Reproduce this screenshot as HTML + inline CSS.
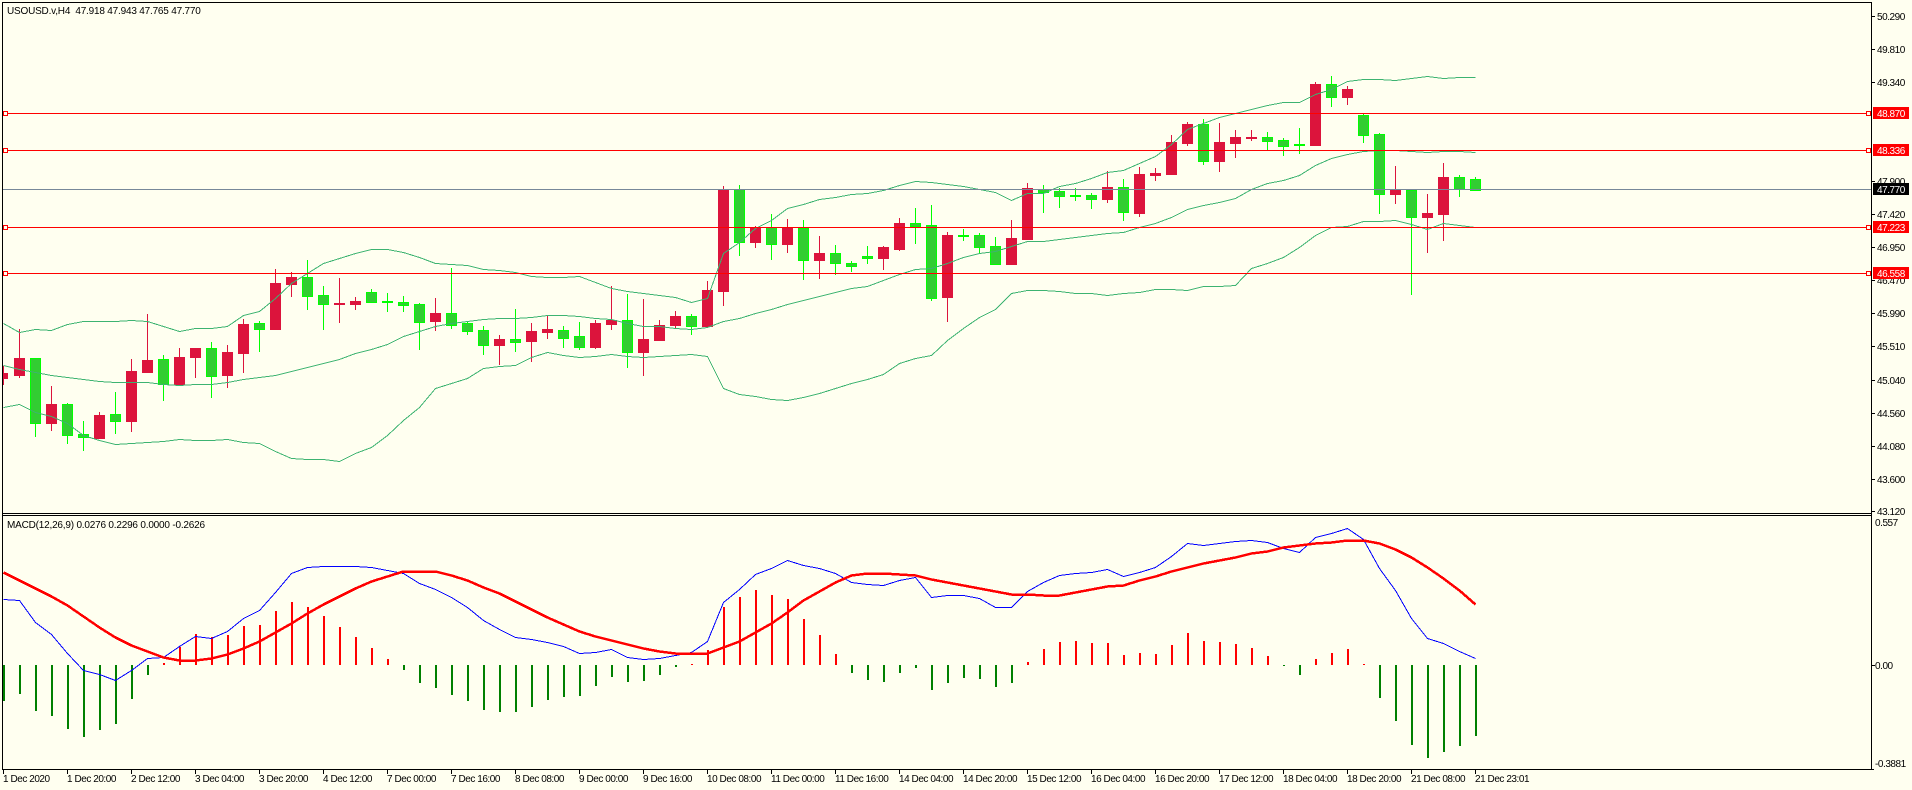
<!DOCTYPE html>
<html><head><meta charset="utf-8"><title>USOUSD.v,H4</title>
<style>
html,body{margin:0;padding:0;background:#fffff0;width:1912px;height:790px;overflow:hidden}
svg{display:block}
text{font-family:"Liberation Sans",sans-serif;font-size:10px;letter-spacing:-.45px;fill:#000;white-space:pre}
text.w{fill:#fff}
text.h{letter-spacing:-.2px}
</style></head><body>
<svg xmlns="http://www.w3.org/2000/svg" width="1912" height="790" viewBox="0 0 1912 790">
<defs><clipPath id="m"><rect x="3" y="3" width="1868" height="510"/></clipPath><clipPath id="n"><rect x="3" y="516" width="1868" height="253"/></clipPath></defs>
<rect width="1912" height="790" fill="#fffff0"/>
<g shape-rendering="crispEdges" clip-path="url(#m)" fill="none">
<path stroke="#dc143c" d="M3.5 366V385M19.5 329V378M51.5 386V431M99.5 412V438M131.5 359V432M147.5 314V373M179.5 348V385M195.5 348V378M227.5 345V388M243.5 319V373M275.5 269V330M291.5 272V297M339.5 278V323M355.5 297V310M435.5 298V331M499.5 335V365M531.5 323V362M547.5 316V339M595.5 320V349M611.5 286V330M643.5 299V376M659.5 320V341M675.5 311V329M707.5 281V327M723.5 186V306M755.5 226V248M787.5 219V253M819.5 236V279M883.5 246V270M899.5 218V251M947.5 232V322M1011.5 220V265M1027.5 183V239M1107.5 171V203M1139.5 167V217M1155.5 168V181M1171.5 135V175M1187.5 122V146M1219.5 123V172M1235.5 130V158M1251.5 130V141M1315.5 82V145M1347.5 86V105M1395.5 166V204M1427.5 194V253M1443.5 163V241"/>
<path stroke="#00ff00" d="M35.5 358V437M67.5 403V444M83.5 421V451M115.5 392V434M163.5 355V401M211.5 342V398M259.5 321V352M307.5 260V310M323.5 286V330M371.5 289V302M387.5 293V312M403.5 296V312M419.5 303V350M451.5 268V329M467.5 321V335M483.5 326V355M515.5 309V352M563.5 326V348M579.5 322V350M627.5 294V368M691.5 314V335M739.5 185V256M771.5 214V260M803.5 220V280M835.5 245V275M851.5 261V272M867.5 246V264M915.5 208V244M931.5 205V301M963.5 229V241M979.5 233V254M995.5 237V264M1043.5 185V213M1059.5 188V208M1075.5 188V201M1091.5 193V209M1123.5 179V221M1203.5 119V165M1267.5 132V150M1283.5 138V156M1299.5 128V154M1331.5 76V107M1363.5 114V143M1379.5 133V214M1411.5 190V295M1459.5 175V197M1475.5 177V191"/>
<path stroke="#dc143c" fill="#dc143c" d="M-2.5 373.5h10V378.5h-10zM14.5 358.5h10V375.5h-10zM46.5 404.5h10V423.5h-10zM94.5 415.5h10V438.5h-10zM126.5 371.5h10V421.5h-10zM142.5 360.5h10V372.5h-10zM174.5 357.5h10V384.5h-10zM190.5 348.5h10V357.5h-10zM222.5 352.5h10V375.5h-10zM238.5 324.5h10V353.5h-10zM270.5 283.5h10V329.5h-10zM286.5 277.5h10V284.5h-10zM334.5 303.5h10V304.5h-10zM350.5 301.5h10V304.5h-10zM430.5 313.5h10V321.5h-10zM494.5 339.5h10V345.5h-10zM526.5 331.5h10V341.5h-10zM542.5 329.5h10V332.5h-10zM590.5 323.5h10V347.5h-10zM606.5 320.5h10V324.5h-10zM638.5 339.5h10V352.5h-10zM654.5 325.5h10V340.5h-10zM670.5 316.5h10V325.5h-10zM702.5 290.5h10V326.5h-10zM718.5 189.5h10V291.5h-10zM750.5 227.5h10V242.5h-10zM782.5 227.5h10V244.5h-10zM814.5 253.5h10V260.5h-10zM878.5 247.5h10V258.5h-10zM894.5 223.5h10V249.5h-10zM942.5 235.5h10V297.5h-10zM1006.5 238.5h10V264.5h-10zM1022.5 188.5h10V239.5h-10zM1102.5 187.5h10V199.5h-10zM1134.5 174.5h10V213.5h-10zM1150.5 173.5h10V175.5h-10zM1166.5 142.5h10V174.5h-10zM1182.5 124.5h10V143.5h-10zM1214.5 142.5h10V161.5h-10zM1230.5 137.5h10V143.5h-10zM1246.5 137.5h10V138.5h-10zM1310.5 84.5h10V145.5h-10zM1342.5 89.5h10V97.5h-10zM1390.5 190.5h10V194.5h-10zM1422.5 213.5h10V217.5h-10zM1438.5 177.5h10V214.5h-10z"/>
<path stroke="#00ff00" fill="#32cd32" d="M30.5 358.5h10V423.5h-10zM62.5 404.5h10V435.5h-10zM78.5 434.5h10V437.5h-10zM110.5 414.5h10V421.5h-10zM158.5 359.5h10V384.5h-10zM206.5 348.5h10V376.5h-10zM254.5 323.5h10V329.5h-10zM302.5 277.5h10V296.5h-10zM318.5 295.5h10V304.5h-10zM366.5 292.5h10V302.5h-10zM382.5 301.5h10V302.5h-10zM398.5 302.5h10V305.5h-10zM414.5 304.5h10V322.5h-10zM446.5 313.5h10V325.5h-10zM462.5 323.5h10V331.5h-10zM478.5 330.5h10V345.5h-10zM510.5 339.5h10V342.5h-10zM558.5 330.5h10V338.5h-10zM574.5 336.5h10V347.5h-10zM622.5 320.5h10V352.5h-10zM686.5 316.5h10V326.5h-10zM734.5 189.5h10V242.5h-10zM766.5 227.5h10V244.5h-10zM798.5 228.5h10V260.5h-10zM830.5 253.5h10V263.5h-10zM846.5 263.5h10V266.5h-10zM862.5 256.5h10V258.5h-10zM910.5 223.5h10V226.5h-10zM926.5 225.5h10V298.5h-10zM958.5 235.5h10V236.5h-10zM974.5 235.5h10V247.5h-10zM990.5 246.5h10V264.5h-10zM1038.5 189.5h10V192.5h-10zM1054.5 191.5h10V196.5h-10zM1070.5 195.5h10V196.5h-10zM1086.5 195.5h10V199.5h-10zM1118.5 187.5h10V212.5h-10zM1198.5 124.5h10V161.5h-10zM1262.5 137.5h10V141.5h-10zM1278.5 140.5h10V146.5h-10zM1294.5 144.5h10V145.5h-10zM1326.5 84.5h10V97.5h-10zM1358.5 115.5h10V135.5h-10zM1374.5 134.5h10V194.5h-10zM1406.5 190.5h10V217.5h-10zM1454.5 177.5h10V189.5h-10zM1470.5 179.5h10V190.5h-10z"/>
<g transform="translate(.5 .5)" stroke="#3cb371" stroke-width="1">
<polyline points="3,323 19,332 35,329 51,330 67,324 83,321 99,321 115,321 131,320 147,321 163,326 179,331 195,328 211,328 227,326 243,315 259,311 275,298 291,283 307,273 323,263 339,258 355,253 371,249 387,249 403,252 419,257 435,263 451,264 467,265 483,269 499,270 515,272 531,276 547,277 563,277 579,276 595,282 611,288 627,291 643,293 659,295 675,297 691,302 707,298 723,253 739,242 755,228 771,220 787,208 803,204 819,199 835,197 851,194 867,193 883,190 899,185 915,181 931,182 947,184 963,186 979,189 995,192 1011,200 1027,193 1043,193 1059,186 1075,183 1091,178 1107,172 1123,170 1139,163 1155,156 1171,144 1187,129 1203,123 1219,117 1235,113 1251,109 1267,105 1283,102 1299,102 1315,94 1331,89 1347,81 1363,79 1379,79 1395,80 1411,78 1427,76 1443,78 1459,77 1475,77"/>
<polyline points="3,365 19,369 35,372 51,375 67,377 83,379 99,381 115,382 131,382 147,382 163,384 179,385 195,384 211,384 227,382 243,379 259,377 275,375 291,371 307,367 323,363 339,359 355,353 371,349 387,344 403,336 419,331 435,326 451,323 467,321 483,319 499,318 515,318 531,317 547,315 563,315 579,316 595,318 611,319 627,323 643,326 659,326 675,328 691,329 707,327 723,321 739,318 755,313 771,309 787,304 803,300 819,296 835,292 851,288 867,286 883,280 899,274 915,269 931,268 947,263 963,257 979,253 995,251 1011,246 1027,241 1043,241 1059,239 1075,237 1091,235 1107,233 1123,232 1139,227 1155,223 1171,217 1187,209 1203,205 1219,202 1235,198 1251,189 1267,183 1283,180 1299,175 1315,165 1331,158 1347,154 1363,151 1379,150 1395,150 1411,151 1427,152 1443,151 1459,151 1475,152"/>
<polyline points="3,407 19,404 35,412 51,416 67,423 83,435 99,440 115,444 131,443 147,442 163,441 179,439 195,440 211,440 227,439 243,442 259,443 275,451 291,458 307,459 323,459 339,461 355,453 371,447 387,435 403,420 419,407 435,388 451,383 467,378 483,368 499,366 515,365 531,357 547,352 563,355 579,357 595,356 611,354 627,356 643,357 659,356 675,355 691,354 707,356 723,388 739,394 755,396 771,399 787,400 803,397 819,393 835,388 851,383 867,379 883,374 899,363 915,358 931,355 947,340 963,328 979,317 995,309 1011,293 1027,290 1043,290 1059,291 1075,293 1091,293 1107,295 1123,293 1139,292 1155,289 1171,289 1187,290 1203,286 1219,286 1235,285 1251,268 1267,263 1283,257 1299,247 1315,235 1331,227 1347,226 1363,221 1379,221 1395,220 1411,224 1427,229 1443,223 1459,225 1475,227"/>
</g>
<path stroke="#778899" d="M3 189.5H1871"/>
<path stroke="#ff0000" d="M3 113.5H1871M3 150.5H1871M3 227.5H1871M3 273.5H1871"/>
<g stroke="#ff0000" fill="#fffff0"><rect x="3.5" y="111.5" width="4" height="4"/><rect x="3.5" y="148.5" width="4" height="4"/><rect x="3.5" y="225.5" width="4" height="4"/><rect x="3.5" y="271.5" width="4" height="4"/><rect x="1866.5" y="111.5" width="4" height="4"/><rect x="1866.5" y="148.5" width="4" height="4"/><rect x="1866.5" y="225.5" width="4" height="4"/><rect x="1866.5" y="271.5" width="4" height="4"/></g>
</g>
<g shape-rendering="crispEdges" clip-path="url(#n)" fill="none">
<path stroke="#008000" stroke-width="2" d="M4 665V701M20 665V694M36 665V711M52 665V716M68 665V729M84 665V737M100 665V730M116 665V724M132 665V699M148 665V675M404 665V670M420 665V683M436 665V688M452 665V695M468 665V701M484 665V710M500 665V712M516 665V712M532 665V707M548 665V700M564 665V697M580 665V696M596 665V686M612 665V677M628 665V682M644 665V681M660 665V675M676 665V667M852 665V673M868 665V680M884 665V682M900 665V673M916 665V668M932 665V690M948 665V683M964 665V678M980 665V679M996 665V687M1012 665V683M1284 665V666M1300 665V675M1380 665V698M1396 665V721M1412 665V745M1428 665V758M1444 665V752M1460 665V746M1476 665V736"/>
<path stroke="#ff0000" stroke-width="2" d="M164 665V663M180 665V647M196 665V634M212 665V637M228 665V635M244 665V626M260 665V625M276 665V611M292 665V602M308 665V607M324 665V616M340 665V627M356 665V637M372 665V648M388 665V659M692 665V664M708 665V650M724 665V607M740 665V597M756 665V590M772 665V595M788 665V599M804 665V619M820 665V635M836 665V654M1028 665V662M1044 665V649M1060 665V642M1076 665V641M1092 665V643M1108 665V643M1124 665V655M1140 665V653M1156 665V654M1172 665V645M1188 665V633M1204 665V641M1220 665V642M1236 665V644M1252 665V648M1268 665V656M1316 665V659M1332 665V653M1348 665V649M1364 665V664"/>
<g transform="translate(.5 .5)">
<polyline stroke="#0000ff" points="3,599 19,600 35,622 51,634 67,653 83,670 99,674 115,680 131,670 147,658 163,657 179,646 195,636 211,638 227,631 243,618 259,610 275,592 291,573 307,567 323,566 339,566 355,566 371,567 387,570 403,573 419,583 435,589 451,597 467,607 483,620 499,629 515,637 531,639 547,642 563,646 579,653 595,652 611,649 627,657 643,659 659,658 675,655 691,652 707,641 723,602 739,589 755,574 771,568 787,560 803,565 819,568 835,573 851,582 867,584 883,585 899,580 915,577 931,597 947,595 963,595 979,598 995,607 1011,607 1027,591 1043,582 1059,575 1075,573 1091,572 1107,569 1123,576 1139,572 1155,567 1171,556 1187,543 1203,545 1219,543 1235,541 1251,540 1267,542 1283,548 1299,552 1315,537 1331,533 1347,528 1363,539 1379,568 1395,590 1411,618 1427,638 1443,643 1459,651 1475,658"/>
<polyline stroke="#ff0000" stroke-width="2.5" points="3,572 19,580 35,588 51,596 67,605 83,616 99,627 115,637 131,645 147,651 163,657 179,660 195,660 211,658 227,654 243,648 259,641 275,632 291,623 307,613 323,604 339,596 355,588 371,581 387,576 403,571 419,571 435,571 451,575 467,580 483,587 499,593 515,601 531,609 547,617 563,624 579,631 595,636 611,640 627,644 643,648 659,651 675,653 691,653 707,653 723,647 739,641 755,632 771,623 787,612 803,600 819,591 835,582 851,575 867,573 883,573 899,574 915,575 931,579 947,582 963,585 979,588 995,591 1011,594 1027,594 1043,595 1059,595 1075,592 1091,589 1107,586 1123,585 1139,580 1155,576 1171,571 1187,567 1203,563 1219,560 1235,557 1251,553 1267,551 1283,547 1299,545 1315,543 1331,542 1347,540 1363,540 1379,543 1395,549 1411,557 1427,567 1443,578 1459,590 1475,604"/>
</g>
</g>
<g shape-rendering="crispEdges" fill="none" stroke="#000">
<path d="M2 2.5H1872M2.5 2V770M1871.5 2V770M2 513.5H1872M2 515.5H1872M2 769.5H1872"/>
<path d="M1872 16.5h3M1872 49.5h3M1872 82.5h3M1872 181.5h3M1872 214.5h3M1872 247.5h3M1872 280.5h3M1872 313.5h3M1872 346.5h3M1872 380.5h3M1872 413.5h3M1872 446.5h3M1872 479.5h3M1872 511.5h3M1872 665.5h3M1872 769.5h2"/>
<path d="M3.5 770v4M67.5 770v4M131.5 770v4M195.5 770v4M259.5 770v4M323.5 770v4M387.5 770v4M451.5 770v4M515.5 770v4M579.5 770v4M643.5 770v4M707.5 770v4M771.5 770v4M835.5 770v4M899.5 770v4M963.5 770v4M1027.5 770v4M1091.5 770v4M1155.5 770v4M1219.5 770v4M1283.5 770v4M1347.5 770v4M1411.5 770v4M1475.5 770v4"/>
</g>
<text class="h" x="7" y="14">USOUSD.v,H4  47.918 47.943 47.765 47.770</text>
<text class="h" x="7" y="528">MACD(12,26,9) 0.0276 0.2296 0.0000 -0.2626</text>
<g>
<text x="1877" y="20">50.290</text><text x="1877" y="53">49.810</text><text x="1877" y="86">49.340</text><text x="1877" y="185">47.900</text><text x="1877" y="218">47.420</text><text x="1877" y="251">46.950</text><text x="1877" y="284">46.470</text><text x="1877" y="317">45.990</text><text x="1877" y="350">45.510</text><text x="1877" y="384">45.040</text><text x="1877" y="417">44.560</text><text x="1877" y="450">44.080</text><text x="1877" y="483">43.600</text><text x="1877" y="515">43.120</text>
<text x="1875" y="526">0.557</text><text x="1875" y="669">0.00</text><text x="1875" y="767">-0.3881</text>
</g>
<g shape-rendering="crispEdges">
<rect x="1873" y="107" width="36" height="12" fill="#f00"/><rect x="1873" y="144" width="36" height="12" fill="#f00"/><rect x="1873" y="183" width="36" height="12" fill="#000"/><rect x="1873" y="221" width="36" height="12" fill="#f00"/><rect x="1873" y="267" width="36" height="12" fill="#f00"/>
</g>
<text class="w" x="1877" y="117">48.870</text><text class="w" x="1877" y="154">48.336</text><text class="w" x="1877" y="193">47.770</text><text class="w" x="1877" y="231">47.223</text><text class="w" x="1877" y="277">46.558</text>
<g>
<text x="3" y="782">1 Dec 2020</text><text x="67" y="782">1 Dec 20:00</text><text x="131" y="782">2 Dec 12:00</text><text x="195" y="782">3 Dec 04:00</text><text x="259" y="782">3 Dec 20:00</text><text x="323" y="782">4 Dec 12:00</text><text x="387" y="782">7 Dec 00:00</text><text x="451" y="782">7 Dec 16:00</text><text x="515" y="782">8 Dec 08:00</text><text x="579" y="782">9 Dec 00:00</text><text x="643" y="782">9 Dec 16:00</text><text x="707" y="782">10 Dec 08:00</text><text x="771" y="782">11 Dec 00:00</text><text x="835" y="782">11 Dec 16:00</text><text x="899" y="782">14 Dec 04:00</text><text x="963" y="782">14 Dec 20:00</text><text x="1027" y="782">15 Dec 12:00</text><text x="1091" y="782">16 Dec 04:00</text><text x="1155" y="782">16 Dec 20:00</text><text x="1219" y="782">17 Dec 12:00</text><text x="1283" y="782">18 Dec 04:00</text><text x="1347" y="782">18 Dec 20:00</text><text x="1411" y="782">21 Dec 08:00</text><text x="1475" y="782">21 Dec 23:01</text>
</g>
</svg>
</body></html>
